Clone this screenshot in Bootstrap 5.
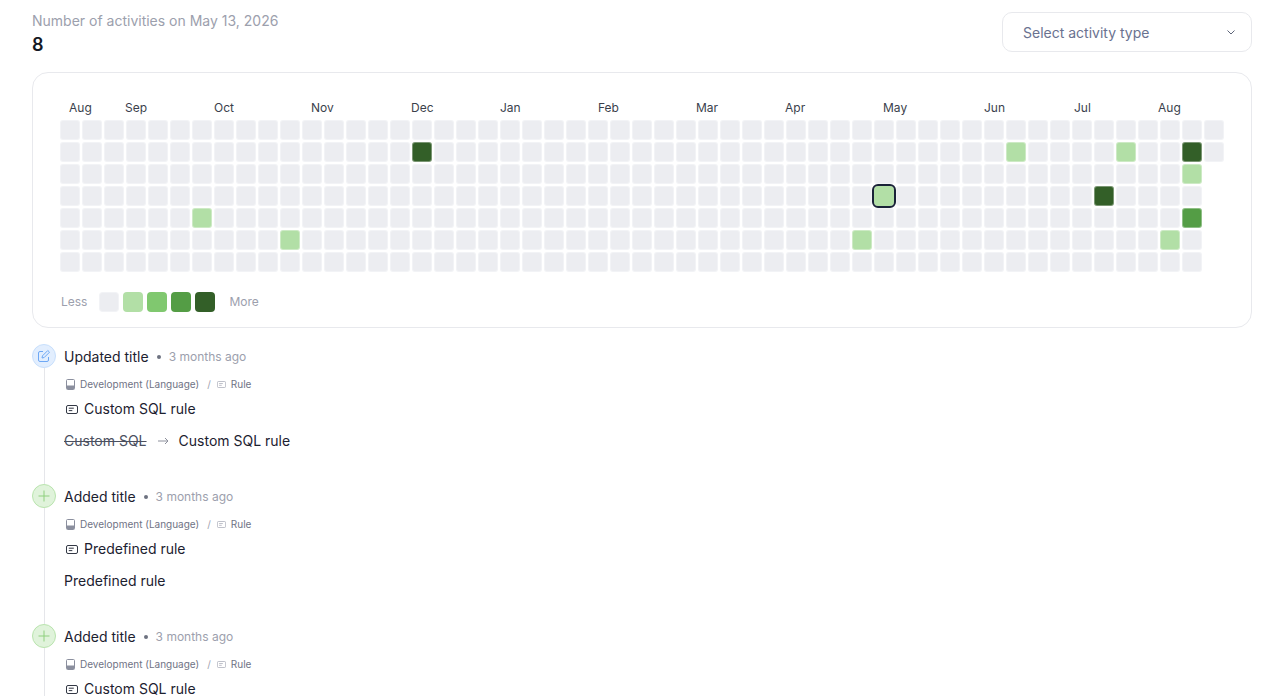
<!DOCTYPE html>
<html lang="en">
<head>
  <meta charset="UTF-8" />
  <meta name="viewport" content="width=device-width, initial-scale=1" />
  <title>Activity</title>
  <link href="https://cdn.jsdelivr.net/npm/bootstrap@5.3.6/dist/css/bootstrap.min.css" rel="stylesheet"/>
  <style>
    html,body{height:696px;overflow:hidden}
    body{font-family:"Inter",sans-serif;font-size:14px;color:#1c2130;background:#fff}
    .page-wrap{padding:12px 33px 0 32px}
    .stat-label{font-size:14px;line-height:18px;color:#9ca0ad}
    .stat-value{font-size:18px;line-height:24px;font-weight:600;color:#141824;margin-top:3px}
    .type-select{width:250px;height:40px;border:1px solid #e8e9ed;border-radius:10px;padding:0 16px 0 20px;color:#6a7290;font-size:14px}
    .chart-box{height:256px;border:1px solid #e8e9ed;border-radius:16px;margin-top:15px;padding:27px 27px 0}
    .month-row{display:flex;padding-left:9px;height:20px;font-size:12px;line-height:16px;color:#3b3f4c}
    .month-row span{flex:none}
    .cell-grid{display:grid;grid-template-rows:repeat(7,20px);grid-auto-flow:column;grid-auto-columns:20px;gap:2px}
    .cell{border-radius:3px;background:#ecedf1;border:1px solid rgba(255,255,255,.35)}
    .lv1{background:#b2dfa6}
    .lv2{background:#80c86f}
    .lv3{background:#549d45}
    .lv4{background:#335f28}
    .cell-picked{outline:2px solid #1a2338;border:0;border-radius:4px}
    .legend-row{margin-top:20px;height:20px;font-size:12px;color:#9ca0ad;padding-left:1px}
    .legend-cell{width:20px;height:20px;border-radius:4px}
    .legend-gap{margin:0 14px 0 12px}
    .tl-item{height:140px}
    .tl-rail{width:24px;flex:none}
    .tl-dot{width:24px;height:24px;border-radius:50%;flex:none}
    .dot-blue{background:#e2eefe;border:1px solid #c8dffc;color:#6ea8f5}
    .dot-green{background:#e0f3db;border:1px solid #b9e4ae;color:#8fd07f}
    .tl-line{width:1px;flex:1;background:#e5e6ea}
    .tl-body{padding-left:8px;padding-top:4px}
    .tl-title{line-height:18px;color:#1c2130}
    .tl-sep{width:4px;height:4px;border-radius:50%;background:#6d7280;margin:0 8px}
    .tl-time{font-size:12px;color:#9ca0ad}
    .crumbs{font-size:10px;line-height:14px;color:#6f7385;margin-top:11px;padding-left:2px}
    .crumbs-book{color:#8b8f9e;margin-right:5px}
    .crumbs-rule{color:#a0a3b0;margin-right:5px}
    .crumbs-slash{margin:0 6px 0 8px;color:#a0a3b0}
    .rule-name{line-height:18px;margin-top:9px;padding-left:2px;color:#1c2130}
    .rule-name svg{margin-right:6px}
    .diff-row{line-height:18px;margin-top:14px;color:#1c2130}
    .diff-arrow{margin:0 10px 0 11px;display:inline-flex}
    .old-val{text-decoration:line-through;color:#4b5060}
  </style>
</head>
<body>
  <div class="page-wrap">
    <div class="d-flex justify-content-between align-items-start">
      <div>
        <div class="stat-label">Number of activities on May 13, 2026</div>
        <div class="stat-value">8</div>
      </div>
      <div class="type-select d-flex align-items-center justify-content-between">
        <span>Select activity type</span>
        <svg width="8" height="5" viewBox="0 0 8 5" fill="none" stroke="#5d6478" stroke-width="1"><path d="M.5 .5 4 4 7.500 .5"/></svg>
      </div>
    </div>

    <div class="chart-box">
      <div class="month-row" id="months"></div>
      <div class="cell-grid" id="cells"></div>
      <div class="legend-row d-flex align-items-center">
        <span>Less</span>
        <div class="d-flex gap-1 legend-gap">
          <div class="legend-cell cell"></div>
          <div class="legend-cell lv1"></div>
          <div class="legend-cell lv2"></div>
          <div class="legend-cell lv3"></div>
          <div class="legend-cell lv4"></div>
        </div>
        <span>More</span>
      </div>
    </div>

    <div id="timeline" class="mt-3"></div>
  </div>

  <script src="https://cdn.jsdelivr.net/npm/bootstrap@5.3.6/dist/js/bootstrap.bundle.min.js"></script>
  <script>
    /* month label, width up to the next label */
    const months = [["Aug",56],["Sep",89],["Oct",97],["Nov",100],["Dec",89],["Jan",98],["Feb",98],["Mar",89],["Apr",98],["May",101],["Jun",90],["Jul",84],["Aug",40]];
    document.getElementById("months").innerHTML = months.map(m => `<span style="width:${m[1]}px">${m[0]}</span>`).join("");

    /* col-row -> level */
    const levels = {"16-1":4,"43-1":1,"48-1":1,"51-1":4,"51-2":1,"37-3":1,"47-3":4,"6-4":1,"51-4":3,"10-5":1,"36-5":1,"50-5":1};
    let html = "";
    for(let c=0;c<53;c++){
      const rows = c==52 ? 2 : 7;
      for(let r=0;r<rows;r++){
        const lv = levels[c+"-"+r];
        html += `<div class="cell ${lv?"lv"+lv:""} ${c==37&&r==3?"cell-picked":""}"></div>`;
      }
    }
    document.getElementById("cells").innerHTML = html;

    const bookIcon = `<svg class="crumbs-book" width="9" height="11" viewBox="0 0 9 11"><rect x=".5" y=".5" width="8" height="10" rx="1" fill="#fff" stroke="currentColor"/><path d="M1 6.500h7V10H1z" fill="currentColor"/></svg>`;
    const ruleIcon = (s,cls) => `<svg class="${cls}" width="${s}" height="${Math.round(s*.75)}" viewBox="0 0 12 9" fill="none" stroke="currentColor" stroke-width=".9"><rect x=".5" y=".5" width="11" height="8" rx="1.500"/><path d="M2.800 3.200h5M2.800 5.600h3.500"/></svg>`;
    const editIcon = `<svg width="14" height="14" viewBox="0 0 14 14" fill="none" stroke="currentColor" stroke-width="1"><path d="M6 2.500H3A1.500 1.500 0 0 0 1.500 4v7A1.500 1.500 0 0 0 3 12.500h7a1.500 1.500 0 0 0 1.500-1.500V8"/><path d="M5.500 6.800 10.800 1.500l1.700 1.700-5.300 5.300-2.200.5z"/></svg>`;
    const plusIcon = `<svg width="12" height="12" viewBox="0 0 12 12" fill="none" stroke="currentColor" stroke-width="1"><path d="M6 .5v11M.5 6h11"/></svg>`;
    const arrow = `<svg width="11" height="8" viewBox="0 0 11 8" fill="none" stroke="#8d909c" stroke-width="1"><path d="M0 4h10M7 1l3 3-3 3"/></svg>`;

    const items = [
      {dot:"dot-blue",icon:editIcon,title:"Updated title",rule:"Custom SQL rule",diff:`<span class="old-val">Custom SQL</span><span class="diff-arrow">${arrow}</span><span>Custom SQL rule</span>`},
      {dot:"dot-green",icon:plusIcon,title:"Added title",rule:"Predefined rule",diff:"<span>Predefined rule</span>"},
      {dot:"dot-green",icon:plusIcon,title:"Added title",rule:"Custom SQL rule",diff:""}
    ];
    document.getElementById("timeline").innerHTML = items.map(it => `
      <div class="tl-item d-flex">
        <div class="tl-rail d-flex flex-column align-items-center">
          <div class="tl-dot ${it.dot} d-flex align-items-center justify-content-center">${it.icon}</div>
          <div class="tl-line"></div>
        </div>
        <div class="tl-body">
          <div class="d-flex align-items-center">
            <span class="tl-title">${it.title}</span><span class="tl-sep"></span><span class="tl-time">3 months ago</span>
          </div>
          <div class="crumbs d-flex align-items-center">
            ${bookIcon}<span>Development (Language)</span><span class="crumbs-slash">/</span>${ruleIcon(9,"crumbs-rule")}<span>Rule</span>
          </div>
          <div class="rule-name d-flex align-items-center">${ruleIcon(12,"")}<span>${it.rule}</span></div>
          ${it.diff?`<div class="diff-row d-flex align-items-center">${it.diff}</div>`:""}
        </div>
      </div>`).join("");
  </script>
</body>
</html>
